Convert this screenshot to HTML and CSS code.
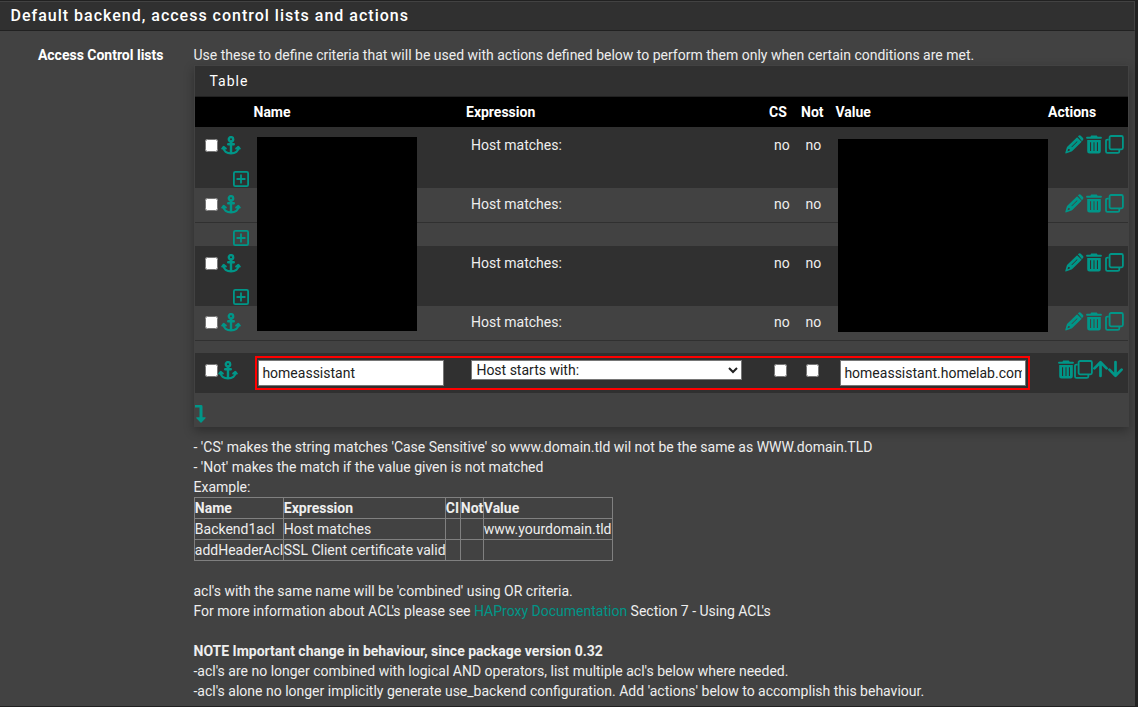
FILE: index.html
```html
<!DOCTYPE html>
<html lang="en">
<head>
<meta charset="utf-8">
<title>Default backend, access control lists and actions</title>
<link rel="stylesheet" href="styles.css">
</head>
<body>
<svg class="sprite" aria-hidden="true">
  <symbol id="anchor" viewBox="0 0 20 19"><g fill="none" stroke="currentColor" stroke-width="2.4" stroke-linecap="round" stroke-linejoin="round"><circle cx="10" cy="3.3" r="2.2"/><path d="M10 5.8V17.2M7.2 8.3H12.8M2.6 11.5C2.6 15.2 5.8 17.4 10 17.4S17.4 15.2 17.4 11.5"/><path d="M1.2 12.6L2.8 10.9L4.8 12.6M15.2 12.6L17.2 10.9L18.8 12.6" stroke-width="2"/></g></symbol>
  <symbol id="plus" viewBox="0 0 16 16"><g fill="none" stroke="currentColor" stroke-width="1.8" stroke-linecap="round"><rect x=".9" y=".9" width="14.2" height="14.2" rx="1.4"/><path d="M8 4.2V11.8M4.2 8H11.8"/></g></symbol>
  <symbol id="pencil" viewBox="0 0 19 19"><path fill="currentColor" fill-rule="evenodd" d="M12.9 1.3L14 .6Q15 0 16 .9L18 2.9Q18.9 4 18 5L17 6.2ZM12.1 2.2L16.7 6.7L7.3 16Q6.5 16.6 5.8 16.8L.9 18.4Q.2 18.5.3 17.7L1.8 12.6Q2 12 2.5 11.5ZM3.3 14L2.5 16.2L4.8 15.4V14.2ZM6.4 11.8L12 6.2L12.5 6.7L6.9 12.3Z"/></symbol>
  <symbol id="trash" viewBox="0 0 16 19"><path fill="currentColor" fill-rule="evenodd" d="M5.2.5H10.8L11.6 1.7H15Q15.9 1.7 15.9 2.7T15 3.8H1Q.1 3.8.1 2.7T1 1.7H4.4ZM1.2 5H14.8V16.2Q14.8 18.5 12.6 18.5H3.4Q1.2 18.5 1.2 16.2ZM4 7.2V16.1H5.1V7.2ZM7.5 7.2V16.1H8.5V7.2ZM10.9 7.2V16.1H12V7.2Z"/></symbol>
  <symbol id="clone" viewBox="0 0 19 19"><g fill="none" stroke="currentColor" stroke-width="1.8"><rect x="4.6" y="1" width="13.3" height="13.3" rx="1.5"/><path d="M3.7 4.6H2.5Q1 4.6 1 6.1V16.4Q1 17.9 2.5 17.9H12.8Q14.3 17.9 14.3 16.4V15"/></g></symbol>
  <symbol id="up" viewBox="0 0 15 18"><path d="M7.5 16V2.5M1.4 8.4L7.5 2.3L13.6 8.4" fill="none" stroke="currentColor" stroke-width="2.7" stroke-linecap="round" stroke-linejoin="round"/></symbol>
  <symbol id="down" viewBox="0 0 15 18"><path d="M7.5 2V15.5M1.4 9.6L7.5 15.7L13.6 9.6" fill="none" stroke="currentColor" stroke-width="2.7" stroke-linecap="round" stroke-linejoin="round"/></symbol>
  <symbol id="turn" viewBox="0 0 11 18"><path fill="currentColor" d="M0 0H6Q7.5 0 7.5 1.3V12.3H10.2Q11 12.6 10.5 13.3L6.5 17.6Q6 18.1 5.5 17.6L1.4 13.3Q.9 12.6 1.7 12.3H4.5V2.4H0Z"/></symbol>
</svg>
<main class="panel">
  <h2 class="panel-title">Default backend, access control lists and actions</h2>
  <div class="panel-body">
    <div class="label">Access Control lists</div>
    <div class="content">
      <p class="intro">Use these to define criteria that will be used with actions defined below to perform them only when certain conditions are met.</p>
      <section class="acl">
        <h3 class="acl-title">Table</h3>
        <div class="cols head"><span class="c-name">Name</span><span class="c-expr">Expression</span><span class="c-cs">CS</span><span class="c-not">Not</span><span class="c-value">Value</span><span class="c-act">Actions</span></div>
        <div class="cols row first dark">
          <span class="c-sel"><input type="checkbox"><svg class="anchor"><use href="#anchor"/></svg></span><span class="c-expr">Host matches:</span><span class="c-cs">no</span><span class="c-not">no</span>
          <span class="c-act"><svg class="sq"><use href="#pencil"/></svg><svg class="trash"><use href="#trash"/></svg><svg class="sq"><use href="#clone"/></svg></span>
          <svg class="plus"><use href="#plus"/></svg>
        </div>
        <div class="cols row">
          <span class="c-sel"><input type="checkbox"><svg class="anchor"><use href="#anchor"/></svg></span><span class="c-expr">Host matches:</span><span class="c-cs">no</span><span class="c-not">no</span>
          <span class="c-act"><svg class="sq"><use href="#pencil"/></svg><svg class="trash"><use href="#trash"/></svg><svg class="sq"><use href="#clone"/></svg></span>
          <svg class="plus"><use href="#plus"/></svg>
        </div>
        <div class="cols row dark third">
          <span class="c-sel"><input type="checkbox"><svg class="anchor"><use href="#anchor"/></svg></span><span class="c-expr">Host matches:</span><span class="c-cs">no</span><span class="c-not">no</span>
          <span class="c-act"><svg class="sq"><use href="#pencil"/></svg><svg class="trash"><use href="#trash"/></svg><svg class="sq"><use href="#clone"/></svg></span>
          <svg class="plus"><use href="#plus"/></svg>
        </div>
        <div class="cols row last">
          <span class="c-sel"><input type="checkbox"><svg class="anchor"><use href="#anchor"/></svg></span><span class="c-expr">Host matches:</span><span class="c-cs">no</span><span class="c-not">no</span>
          <span class="c-act"><svg class="sq"><use href="#pencil"/></svg><svg class="trash"><use href="#trash"/></svg><svg class="sq"><use href="#clone"/></svg></span>
        </div>
        <div class="edit dark">
          <input type="checkbox"><svg class="anchor"><use href="#anchor"/></svg>
          <input class="field name" type="text" value="homeassistant">
          <select class="choice"><option>Host starts with:</option></select>
          <input class="cs" type="checkbox"><input class="not" type="checkbox">
          <input class="field value" type="text" value="homeassistant.homelab.com">
          <span class="edit-actions"><svg class="trash"><use href="#trash"/></svg><svg class="sq"><use href="#clone"/></svg><svg class="arrow"><use href="#up"/></svg><svg class="arrow"><use href="#down"/></svg></span>
        </div>
        <div class="foot"><svg class="turn"><use href="#turn"/></svg></div>
        <div class="mask mask-name"></div>
        <div class="mask mask-value"></div>
        <div class="highlight"></div>
      </section>
      <div class="help">
        - 'CS' makes the string matches 'Case Sensitive' so www.domain.tld wil not be the same as WWW.domain.TLD<br>
        - 'Not' makes the match if the value given is not matched<br>
        Example:
        <table>
          <colgroup><col class="w-name"><col class="w-expr"><col class="w-ci"><col class="w-not"><col class="w-value"></colgroup>
          <tr class="th"><td>Name</td><td>Expression</td><td>CI</td><td>Not</td><td>Value</td></tr>
          <tr><td>Backend1acl</td><td>Host matches</td><td></td><td></td><td>www.yourdomain.tld</td></tr>
          <tr><td>addHeaderAcl</td><td>SSL Client certificate valid</td><td></td><td></td><td></td></tr>
        </table>
        <br>
        acl's with the same name will be 'combined' using OR criteria.<br>
        For more information about AC<span class="kern">L</span>'s please see <a href="#">HAProxy Documentation</a> Section 7 - Using AC<span class="kern">L</span>'s<br>
        <br>
        <b>NOTE Important change in behaviour, since package version 0.32</b><br>
        -acl's are no longer combined with logical AND operators, list multiple acl's below where needed.<br>
        -acl's alone no longer implicitly generate use_backend configuration. Add 'actions' below to accomplish this behaviour.
      </div>
    </div>
  </div>
</main>
</body>
</html>
```

FILE: styles.css
```css
* { box-sizing: border-box; }
body { margin: 0; height: 707px; overflow: hidden; background: #212121; color: #fff; font: 14px/20px Roboto, sans-serif; }
.sprite { position: absolute; width: 0; height: 0; }
svg { display: block; flex: none; color: #009688; }
.panel { width: 1135px; height: 706px; padding-top: 1px; background: #212121; }
.panel-title { margin: 0; width: 1135px; height: 30px; padding: 4px 0 0 10.5px; border-top: 1px solid #424242; border-right: 1px solid #424242; border-bottom: 1px solid #212121; background: #303030; font-size: 16px; line-height: 20px; font-weight: 500; letter-spacing: 1px; }
.panel-body { display: flex; gap: 30px; height: 675px; padding-top: 14px; background: #424242; }
.label { width: 163.5px; text-align: right; font-weight: 700; }
.content { width: 936px; }
.intro { margin: 0; color: #eee; white-space: nowrap; }
.acl { position: relative; width: 935px; margin: 0 0 10px .5px; padding-top: 1px; border: solid #424242; border-width: 0 1px; background: #424242; box-shadow: 0 4px 10px rgba(0,0,0,.3); }
.acl-title { margin: 0; height: 31px; padding: 5px 14.5px; border-bottom: 1px solid #212121; background: #303030; font-size: 14px; font-weight: 400; letter-spacing: 1px; }
.cols { display: grid; grid-template-columns: 10px 261px 303px 32px 32px 230px 65px; }
.head { height: 30px; padding-top: 5px; background: #000; font-weight: 700; }
.head .c-name { grid-column: 2; padding-left: 48.5px; }
.head .c-value { padding-left: 2.5px; }
.head .c-act { margin-left: -15px; }
.dark { background: #303030; }
.row { height: 58px; grid-template-rows: 36px 16px; background: linear-gradient(#303030,#303030) 0 34px / 100% 1px no-repeat #424242; padding-top: 6px; color: #eee; grid-template-columns: 10px 266px 303px 31.5px 33.5px 225px 64px; }
.row.dark { background: #303030; }
.row.first { height: 61px; padding-top: 8px; }
.row.third { height: 60px; padding-top: 7px; }
.row.last { height: 47px; }
.row > .c-expr { grid-column: 3; }
.row > .c-act { grid-column: 7; display: flex; gap: 2px; margin-left: .5px; }
.row > .c-act .trash { margin: 0 .5px; }
.c-sel { grid-column: 2; display: flex; align-items: flex-start; gap: 3px; padding-top: 4px; }
.c-sel .anchor { margin-top: -3px; }
.row .plus { grid-column: 2; grid-row: 2; margin-left: 28px; }
input[type=checkbox] { flex: none; width: 13px; height: 13px; margin: 0; }
.anchor { width: 20px; height: 19px; }
.plus { width: 16px; height: 16px; }
.sq { width: 19px; height: 19px; }
.trash { width: 16px; height: 19px; }
.arrow { width: 15px; height: 18px; }
.edit { display: flex; align-items: flex-start; height: 40px; padding: 7px 0 0 10px; }
.edit input[type=checkbox] { margin-top: 4px; }
.edit > .anchor { margin-top: 1px; margin-right: 19.5px; margin-left: -.5px; }
.field { width: 186px; height: 26px; margin: 0; padding: 1px 3px 1px 3.4px; border: 1px solid #767676; background: #fff; color: #212121; font: inherit; }
.edit .name { margin-left: 1px; }
.choice { width: 271px; height: 20px; margin-left: 27px; padding: 0 0 0 .4px; border: 1px solid #767676; border-radius: 0; background: #fff; color: #212121; font: inherit; line-height: 18px; }
.edit .cs { margin-left: 32px; }
.edit .not { margin-left: 19px; }
.edit .value { margin-left: 21px; }
.edit-actions { display: flex; margin-left: 32px; }
.edit-actions .sq { margin-right: -.5px; }
.edit-actions .arrow { margin-right: .5px; }
.foot { height: 34px; padding-top: 12px; }
.turn { width: 11px; height: 18px; }
.mask { position: absolute; background: #000; }
.mask-name { left: 62px; top: 72px; width: 160px; height: 194px; }
.mask-value { left: 643px; top: 74px; width: 210px; height: 193px; }
.highlight { position: absolute; left: 60px; top: 291px; width: 775px; height: 34px; border: 2px solid #f00; pointer-events: none; }
.help { color: #eee; white-space: nowrap; }
.help a { color: #009688; text-decoration: none; }
.kern { letter-spacing: -2.4px; }
.help table { width: 419px; table-layout: fixed; border-collapse: collapse; border: 1px solid #808080; }
.help td { height: 21px; padding: 0 0 0 .3px; border: 1px solid #808080; line-height: 20px; }
.th { font-weight: 700; }
.w-name { width: 89px; }
.w-expr { width: 162px; }
.w-ci { width: 15px; }
.w-not { width: 23px; }
.w-value { width: 129px; }
```
